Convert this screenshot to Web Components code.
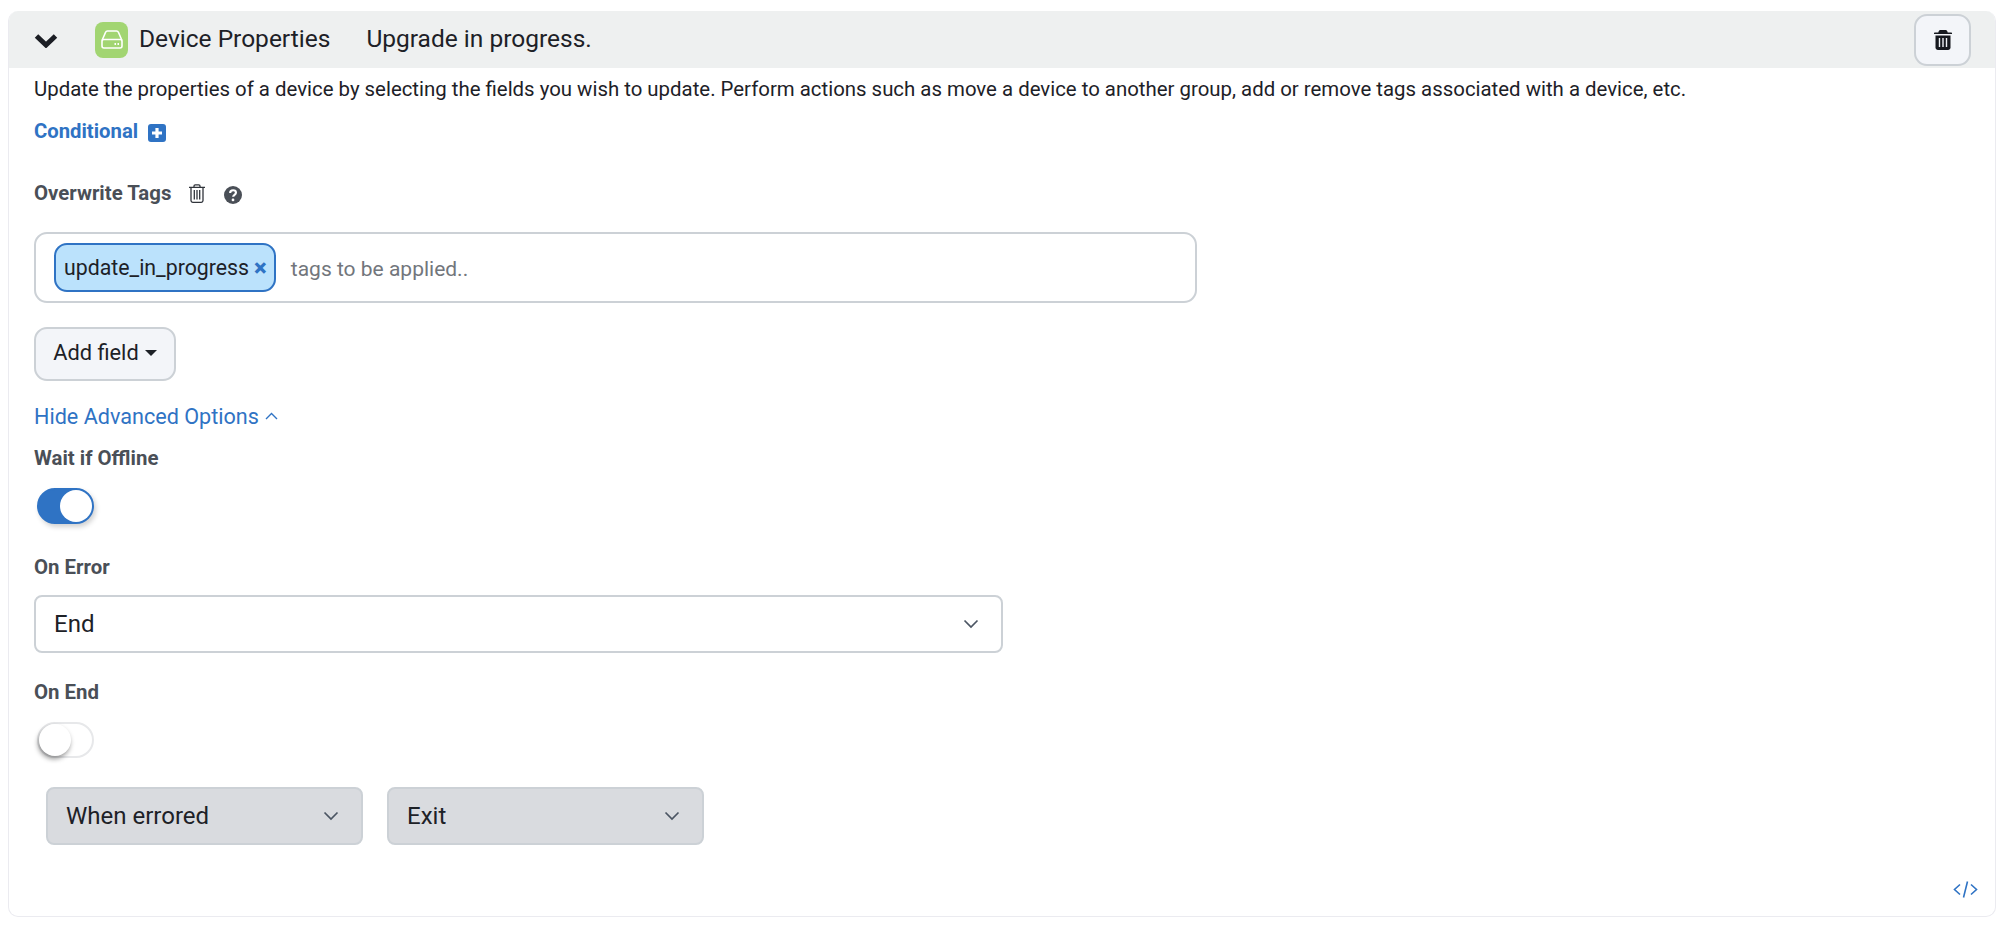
<!doctype html>
<html>
<head>
<meta charset="utf-8">
<style>
  html, body { margin: 0; background: #fff; }
  body { padding: 11px 12px 8px 8px; font-family: Roboto, "Liberation Sans", sans-serif; color: #1d2127; }
</style>
</head>
<body>
<flow-card title-text="Device Properties" status="Upgrade in progress.">
  <p-text>Update the properties of a device by selecting the fields you wish to update. Perform actions such as move a device to another group, add or remove tags associated with a device, etc.</p-text>
  <conditional-link></conditional-link>
  <overwrite-label></overwrite-label>
  <tag-input tag="update_in_progress" placeholder="tags to be applied.."></tag-input>
  <add-field></add-field>
  <advanced-link></advanced-link>
  <field-label style="--top:17px">Wait if Offline</field-label>
  <toggle-switch on style="--top:18px"></toggle-switch>
  <field-label style="--top:31px">On Error</field-label>
  <select-box value="End" style="--top:16px;--w:969px;--h:58px"></select-box>
  <field-label style="--top:27px">On End</field-label>
  <toggle-switch style="--top:18px"></toggle-switch>
  <select-row></select-row>
  <code-toggle></code-toggle>
</flow-card>

<script>
const ICONS = {
  chevron: '<svg width="24" height="15" viewBox="0 0 24 15"><path d="M2.500 3 12 12 21.500 3" fill="none" stroke="#1b1e24" stroke-width="5"/></svg>',
  hdd: '<svg width="22" height="19" viewBox="0 0 22 19" fill="none" stroke="#fff" stroke-width="1.600"><path d="M1 10.500 4.600 2.200c.3-.7.8-1.200 1.800-1.200h9.200c1 0 1.500.5 1.800 1.200L21 10.500"/><rect x="1" y="9.500" width="20" height="8.500" rx="2"/><path d="M13.500 14h1.500M16.500 14H18" stroke-width="1.800"/></svg>',
  trashSolid: '<svg width="18" height="20" viewBox="0 0 18 20"><path fill="#16191f" d="M6.500 0h5c.8 0 1.400.4 1.700 1.100L13.700 2.500H17c.6 0 1 .4 1 1v.5H0v-.5c0-.6.4-1 1-1h3.300l.5-1.400C5.100.4 5.700 0 6.500 0z"/><path fill="#16191f" d="M1.500 5.500h15V17.500c0 1.400-1.100 2.500-2.500 2.500H4c-1.400 0-2.500-1.100-2.500-2.500z"/><path stroke="#eef1f6" stroke-width="1.400" d="M5.500 8v9M9 8v9M12.500 8v9"/></svg>',
  trashLine: '<svg width="16" height="19" viewBox="0 0 16 19" fill="none" stroke="#30343b" stroke-width="1.300"><path d="M0 3.300h16M5 3V2c0-.6.400-1.200 1.200-1.200h3.600c.8 0 1.200.6 1.200 1.200v1M2 3.500V16.500c0 1 .6 1.800 1.700 1.800h8.600c1.100 0 1.700-.8 1.700-1.800V3.500M5.300 6v9.500M8 6v9.500M10.700 6v9.500"/></svg>',
  help: '<svg width="18" height="18" viewBox="0 0 17 17"><circle cx="8.500" cy="8.500" r="8.500" fill="#4a4f57"/><path d="M5.800 6.500c0-1.500 1.200-2.500 2.800-2.500s2.700 1 2.700 2.300c0 2-2.700 2-2.700 3.900" fill="none" stroke="#fff" stroke-width="2"/><circle cx="8.500" cy="13.200" r="1.300" fill="#fff"/></svg>',
  plus: '<svg width="18" height="18" viewBox="0 0 18 18"><rect width="18" height="18" rx="3" fill="#2f73c4"/><path d="M9 4v10M4 9h10" stroke="#fff" stroke-width="3.200"/></svg>',
  caretUp: '<svg width="13" height="8" viewBox="0 0 13 8"><path d="M1 7 6.500 1.500 12 7" fill="none" stroke="#2f73c4" stroke-width="1.400"/></svg>',
  chevDown: '<svg width="16" height="10" viewBox="0 0 16 10"><path d="M1.500 1.500 8 8l6.500-6.500" fill="none" stroke="#4b5563" stroke-width="1.700"/></svg>',
  code: '<svg width="25" height="17" viewBox="0 0 25 17" fill="none" stroke="#2f73c4" stroke-width="1.600"><path d="M7 3.500 1.500 8.500 7 13.500M18 3.500 23.500 8.500 18 13.500M14.500 .5 10.500 16.500"/></svg>'
};

class FlowCard extends HTMLElement {
  connectedCallback() {
    const root = this.attachShadow({ mode: "open" });
    root.innerHTML = `
      <style>
        :host { display: block; height: 906px; box-sizing: border-box; border: 1px solid #ebebf0; border-top: 0; border-radius: 10px; overflow: hidden; position: relative; }
        header { height: 57px; background: #eef0f0; display: flex; align-items: center; padding: 0 24px 0 25px; font-size: 24.500px; color: #1d2127; }
        .chev { display: flex; width: 61px; padding-top: 2px; }
        .ico { width: 33px; height: 36px; background: #a2d572; border-radius: 8px; display: flex; align-items: center; justify-content: center; margin-right: 11px; }
        .name, .status { position: relative; top: -1px; }
        .name { margin-right: 36px; }
        .del { margin-left: auto; width: 57px; height: 52px; box-sizing: border-box; background: #f3f5f9; border: 2px solid #ccd1d6; border-radius: 13px; display: flex; align-items: center; justify-content: center; }
        main { padding: 0 25px; }
      </style>
      <header>
        <span class="chev">${ICONS.chevron}</span>
        <span class="ico">${ICONS.hdd}</span>
        <span class="name">${this.getAttribute("title-text")}</span>
        <span class="status">${this.getAttribute("status")}</span>
        <span class="del">${ICONS.trashSolid}</span>
      </header>
      <main><slot></slot></main>`;
  }
}

class PText extends HTMLElement {
  constructor() {
    super();
    this.attachShadow({ mode: "open" }).innerHTML = `
      <style>:host { display: block; font-size: 20.400px; line-height: 24px; margin-top: 9px; color: #1d2127; }</style><slot></slot>`;
  }
}

class ConditionalLink extends HTMLElement {
  constructor() {
    super();
    this.attachShadow({ mode: "open" }).innerHTML = `
      <style>
        :host { display: flex; align-items: center; gap: 10px; margin-top: 18px; height: 24px; font-size: 20.300px; font-weight: 700; color: #2f73c4; }
        svg { display: block; margin-top: 3px; }
      </style>
      <span>Conditional</span>${ICONS.plus}`;
  }
}

class OverwriteLabel extends HTMLElement {
  constructor() {
    super();
    this.attachShadow({ mode: "open" }).innerHTML = `
      <style>
        :host { display: flex; align-items: center; height: 24px; margin-top: 38px; font-size: 20.400px; font-weight: 700; color: #4a4f57; }
        .a { margin-left: 18px; display: flex; }
        .b { margin-left: 19px; display: flex; margin-top: 3px; }
      </style>
      <span>Overwrite Tags</span><span class="a">${ICONS.trashLine}</span><span class="b">${ICONS.help}</span>`;
  }
}

class TagInput extends HTMLElement {
  connectedCallback() {
    this.attachShadow({ mode: "open" }).innerHTML = `
      <style>
        :host { display: flex; align-items: center; box-sizing: border-box; width: 1163px; height: 71px; margin-top: 27px; border: 2px solid #ccd1d6; border-radius: 13px; padding: 0 18px; font-size: 21.300px; }
        .tag { display: flex; align-items: center; height: 49px; box-sizing: border-box; padding: 0 7px 0 8px; gap: 5px; background: #bbe2fc; border: 2px solid #2f73c4; border-radius: 13px; color: #1d2127; }
        .x { color: #2f73c4; font-weight: 900; font-size: 24px; line-height: 1; }
        .ph { margin-left: 15px; color: #72767c; font-size: 21px; padding-top: 2px; }
      </style>
      <span class="tag">${this.getAttribute("tag")}<span class="x">×</span></span>
      <span class="ph">${this.getAttribute("placeholder")}</span>`;
  }
}

class AddField extends HTMLElement {
  constructor() {
    super();
    this.attachShadow({ mode: "open" }).innerHTML = `
      <style>
        :host { display: flex; width: 142px; height: 54px; box-sizing: border-box; margin-top: 24px; align-items: center; justify-content: center; gap: 6px; background: #f3f5f9; border: 2px solid #ccd1d6; border-radius: 13px; font-size: 21.800px; color: #1d2127; }
        span { position: relative; top: -2px; }
        i { border: 6px solid transparent; border-top-color: #1d2127; border-bottom: 0; margin-top: -3px; }
      </style>
      <span>Add field</span><i></i>`;
  }
}

class AdvancedLink extends HTMLElement {
  constructor() {
    super();
    this.attachShadow({ mode: "open" }).innerHTML = `
      <style>
        :host { display: flex; align-items: center; gap: 6px; height: 26px; margin-top: 22px; font-size: 21.600px; color: #2f73c4; }
      </style>
      <span>Hide Advanced Options</span>${ICONS.caretUp}`;
  }
}

class FieldLabel extends HTMLElement {
  constructor() {
    super();
    this.attachShadow({ mode: "open" }).innerHTML = `
      <style>:host { display: block; height: 24px; line-height: 24px; margin-top: var(--top, 0); font-size: 20.400px; font-weight: 700; color: #4a4f57; }</style><slot></slot>`;
  }
}

class ToggleSwitch extends HTMLElement {
  connectedCallback() {
    const on = this.hasAttribute("on");
    this.attachShadow({ mode: "open" }).innerHTML = `
      <style>
        :host { display: flex; width: 57px; height: 36px; box-sizing: border-box; margin: var(--top, 0) 0 0 3px; border-radius: 18px; background: ${on ? "#2f73c4" : "#fff"}; border: 2px solid ${on ? "#2f73c4" : "#e7e8ea"}; justify-content: ${on ? "flex-end" : "flex-start"}; box-shadow: ${on ? "2px 3px 5px rgba(0,0,0,.18)" : "none"}; }
        i { width: 32px; height: 32px; border-radius: 50%; background: #fff; box-shadow: ${on ? "none" : "-1px 3px 5px rgba(0,0,0,.4)"}; }
      </style><i></i>`;
  }
}

class SelectBox extends HTMLElement {
  connectedCallback() {
    const grey = this.hasAttribute("grey");
    this.attachShadow({ mode: "open" }).innerHTML = `
      <style>
        :host { display: flex; align-items: center; justify-content: space-between; box-sizing: border-box; width: var(--w); height: var(--h); margin-top: var(--top, 0); padding: 0 22px 0 18px; border: 2px solid #ccd1d6; border-radius: 8px; background: ${grey ? "#d9dbdf" : "#fff"}; font-size: 24px; color: #1d2127; }
      </style>
      <span>${this.getAttribute("value")}</span>${ICONS.chevDown}`;
  }
}

class SelectRow extends HTMLElement {
  constructor() {
    super();
    this.attachShadow({ mode: "open" }).innerHTML = `
      <style>:host { display: flex; gap: 24px; margin: 29px 0 0 12px; }
      select-box { --w: 317px; --h: 58px; }</style>
      <select-box grey value="When errored"></select-box>
      <select-box grey value="Exit"></select-box>`;
  }
}

class CodeToggle extends HTMLElement {
  constructor() {
    super();
    this.attachShadow({ mode: "open" }).innerHTML = `
      <style>:host { position: absolute; right: 17px; bottom: 18px; display: flex; }</style>${ICONS.code}`;
  }
}

customElements.define("flow-card", FlowCard);
customElements.define("p-text", PText);
customElements.define("conditional-link", ConditionalLink);
customElements.define("overwrite-label", OverwriteLabel);
customElements.define("tag-input", TagInput);
customElements.define("add-field", AddField);
customElements.define("advanced-link", AdvancedLink);
customElements.define("field-label", FieldLabel);
customElements.define("toggle-switch", ToggleSwitch);
customElements.define("select-box", SelectBox);
customElements.define("select-row", SelectRow);
customElements.define("code-toggle", CodeToggle);
</script>
</body>
</html>
